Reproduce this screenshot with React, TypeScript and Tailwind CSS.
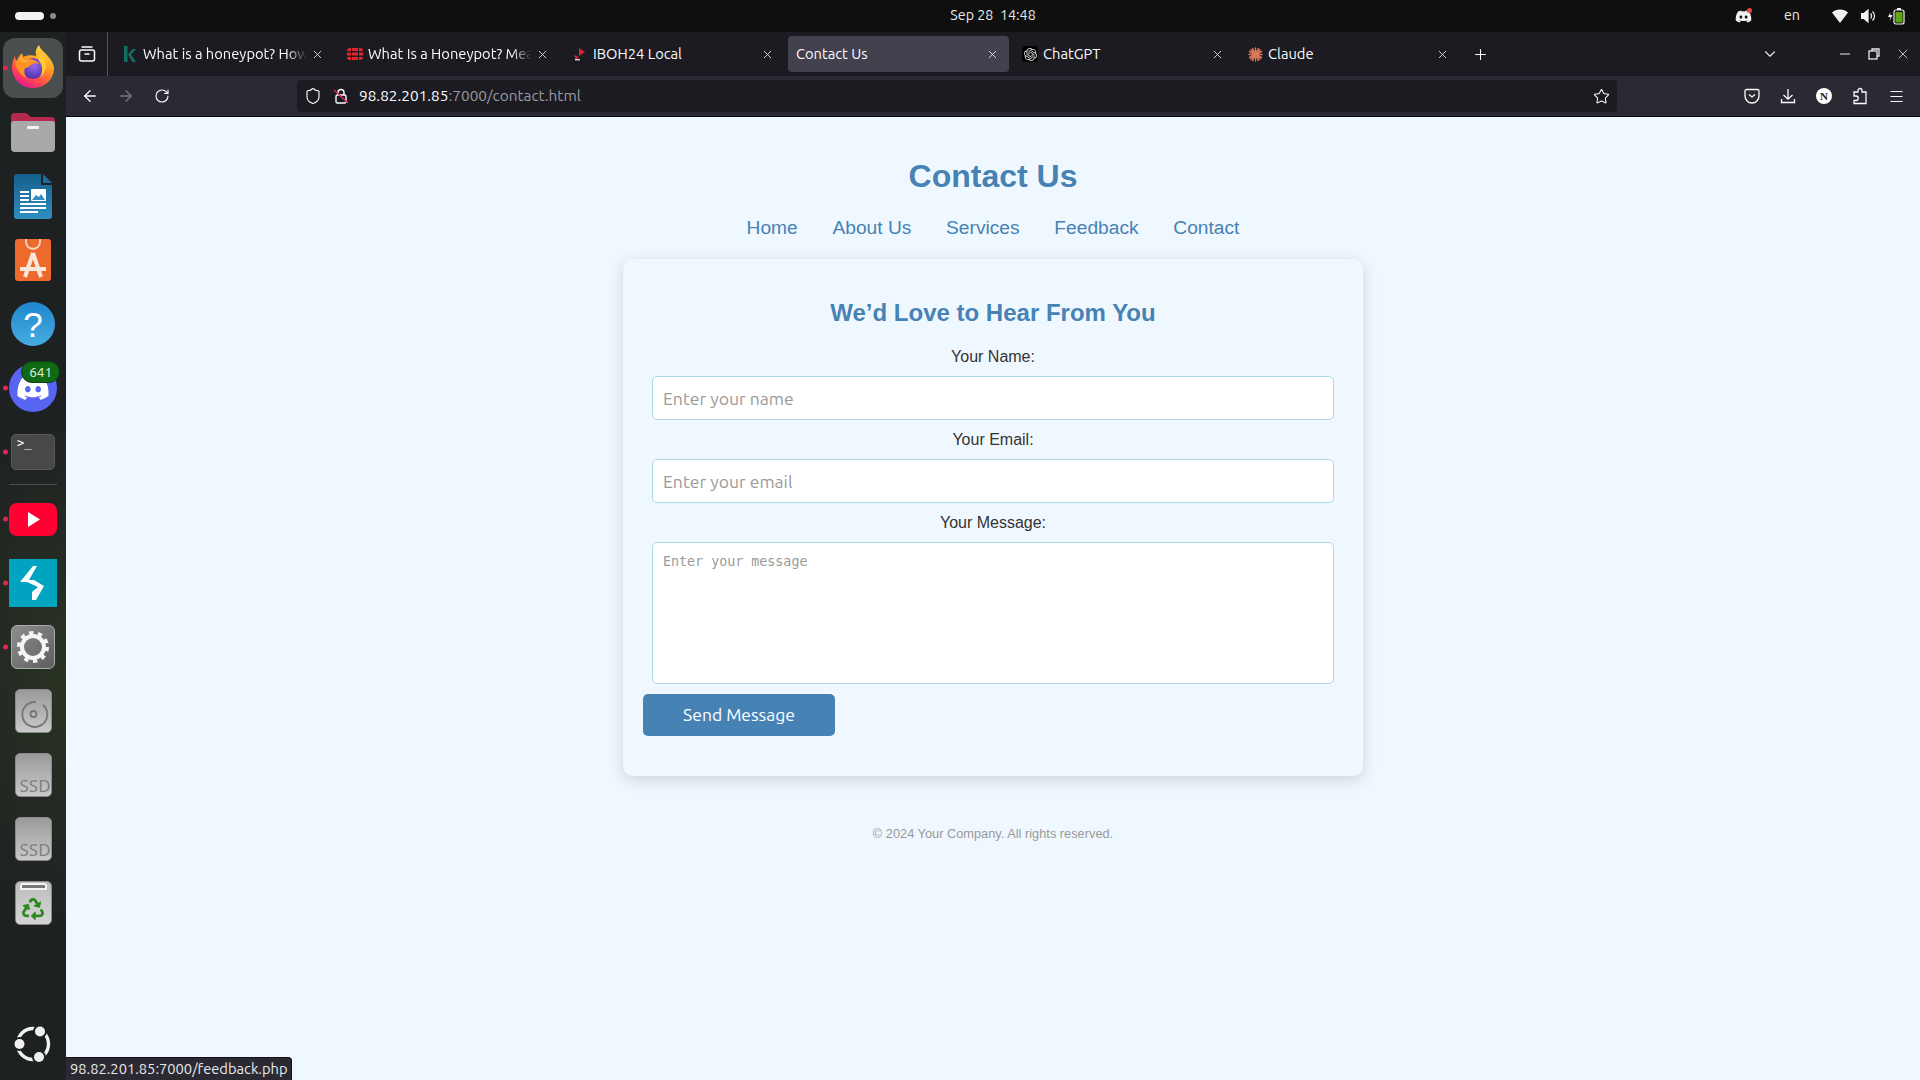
import React from "react";
import { ArrowLeft, ArrowRight, RotateCw, Shield, Star, Menu, X, Plus, ChevronDown, Minus } from "lucide-react";
import { FaDiscord, FaRecycle } from "react-icons/fa";
import { SiOpenai } from "react-icons/si";

const UI = "font-['Ubuntu','Noto_Sans',sans-serif]";

function Firefox() {
  return (
    <svg width="42" height="43" viewBox="0 0 42 43">
      <defs>
        <linearGradient id="ffa" x1="0.85" y1="0" x2="0.3" y2="1">
          <stop offset="0" stopColor="#ffe650" />
          <stop offset="0.4" stopColor="#ffa120" />
          <stop offset="0.75" stopColor="#ff4a4a" />
          <stop offset="1" stopColor="#e9169a" />
        </linearGradient>
        <radialGradient id="ffb" cx="0.55" cy="0.35" r="0.75">
          <stop offset="0" stopColor="#9a68ea" />
          <stop offset="1" stopColor="#4328a8" />
        </radialGradient>
      </defs>
      <path d="M27 0c1 4 4 6 7 9 5 5 8 11 8 14 0 11-9 20-21 20S0 34 0 22c0-5 2-9 3-11l1 5c2-3 3-5 6-8l1 4c4-2 9-2 13-1-1-4 0-8 3-11z" fill="url(#ffa)" />
      <circle cx="21" cy="23.500" r="10.500" fill="url(#ffb)" />
      <path d="M3 17c4-3 9-4 13-3 5 0 9 2 12 5-4-1-7-1-9 1-2 1-3 3-6 3-1 3-1 7 2 10C9 31 4 24 3 17z" fill="#ff9422" />
      <path d="M7 15l3-6 1 5 5 2-4 2z" fill="#ffb03a" />
      <path d="M27 8c5 3 8 9 7 15-1 4-3 7-6 9 3-5 3-12-1-16-1-2-1-5 0-8z" fill="#ffc830" />
    </svg>
  );
}

function Files() {
  return (
    <svg width="46" height="42" viewBox="0 0 46 42">
      <path d="M1 6a4 4 0 0 1 4-4h11l5 4h20a4 4 0 0 1 4 4v10H1z" fill="#b5294e" />
      <path d="M1 13a3 3 0 0 1 3-3h38a3 3 0 0 1 3 3v24a4 4 0 0 1-4 4H5a4 4 0 0 1-4-4z" fill="#a9a9a9" />
      <rect x="17" y="15" width="12" height="3" rx="1" fill="#f2f2f2" />
    </svg>
  );
}

function Writer() {
  return (
    <svg width="38" height="45" viewBox="0 0 38 45">
      <defs>
        <linearGradient id="wr" x1="0" y1="0" x2="0" y2="1">
          <stop offset="0" stopColor="#155e8c" />
          <stop offset="1" stopColor="#2f8fc0" />
        </linearGradient>
      </defs>
      <path d="M3 0h24v11h11v31a3 3 0 0 1-3 3H3a3 3 0 0 1-3-3V3a3 3 0 0 1 3-3z" fill="url(#wr)" />
      <path d="M29 0l9 9h-9z" fill="#1c6d9c" />
      <g fill="#fff">
        <rect x="6" y="17" width="9" height="2" />
        <rect x="6" y="21" width="9" height="2" />
        <rect x="6" y="25" width="9" height="2" />
        <rect x="6" y="29" width="26" height="2" />
        <rect x="6" y="33" width="26" height="2" />
        <rect x="6" y="37" width="18" height="2" />
        <rect x="17" y="15" width="15" height="12" rx="1" />
      </g>
      <path d="M18 26l4-5 3 2 2-3 4 6z" fill="#2f8fc0" />
    </svg>
  );
}

function Store() {
  return (
    <svg width="36" height="42" viewBox="0 0 36 42">
      <rect x="0" y="0" width="36" height="42" rx="3" fill="#ed6a2c" />
      <path d="M11 0v3c0 9 14 9 14 0V0" fill="none" stroke="#f7d9c8" strokeWidth="1.800" />
      <path d="M18 14L10 38M18 14l8 24M5 30h26" fill="none" stroke="#fbe6da" strokeWidth="4" />
    </svg>
  );
}

function Help() {
  return (
    <div className="flex h-[44px] w-[44px] items-center justify-center rounded-full bg-[linear-gradient(#1f86cf,#46ade0)] font-['Liberation_Sans',sans-serif] text-[35px] leading-none text-white">?</div>
  );
}

function DiscordDock() {
  return (
    <div className="flex h-[48px] w-[48px] items-center justify-center rounded-full bg-[#5865f2] text-white">
      <FaDiscord size={34} />
    </div>
  );
}

function Terminal() {
  return (
    <div className="h-[36px] w-[44px] rounded-[5px] border border-[#5a5a5a] bg-[#484848] pl-[5px] font-['DejaVu_Sans_Mono',monospace] text-[12px] leading-[17px] text-white">&gt;_</div>
  );
}

function Youtube() {
  return (
    <svg width="48" height="33" viewBox="0 0 48 33">
      <rect width="48" height="33" rx="8" fill="#ff0033" />
      <path d="M19 9l12 7.500L19 24z" fill="#fff" />
    </svg>
  );
}

function Bolt() {
  return (
    <svg width="48" height="48" viewBox="0 0 48 48">
      <rect width="48" height="48" fill="#00a4c0" />
      <path d="M24 7h4l-8 14h5l10 6-8 14h-4v-8l6-5-11-5h-7z" fill="#fff" />
    </svg>
  );
}

function Settings() {
  return (
    <div className="flex h-[44px] w-[44px] items-center justify-center rounded-[6px] border border-[#a9a9a9] bg-[linear-gradient(135deg,#8e8e8e,#5e5e5e)]">
      <svg width="32" height="32" viewBox="0 0 32 32" fill="none" stroke="#f4f4f4">
        <circle cx="16" cy="16" r="11" strokeWidth="4" />
        <circle cx="16" cy="16" r="14" strokeWidth="4" strokeDasharray="4.300 4.500" />
      </svg>
    </div>
  );
}

function Drive({ children }: { children: React.ReactNode }) {
  return (
    <div className="relative h-[44px] w-[37px] overflow-hidden rounded-[5px] border border-[#8a8a8a] bg-[linear-gradient(#9a9a9a,#c9c9c9)]">{children}</div>
  );
}

function Disc() {
  return (
    <Drive>
      <svg width="35" height="42" viewBox="0 0 35 42">
        <path d="M27 15a12.500 12.500 0 1 1-7-3" fill="none" stroke="#777" strokeWidth="1.900" />
        <circle cx="17.500" cy="24" r="3" fill="none" stroke="#777" strokeWidth="1.800" />
      </svg>
    </Drive>
  );
}

function Ssd() {
  return (
    <Drive>
      <div className="absolute bottom-[0px] left-[4px] font-['Noto_Sans',sans-serif] text-[17px] leading-[20px] text-[#808080]">SSD</div>
    </Drive>
  );
}

function Trash() {
  return (
    <div className="relative flex h-[44px] w-[37px] items-end justify-center overflow-hidden rounded-[5px] border border-[#8a8a8a] bg-[linear-gradient(#bdbdbd,#d4d4d4)] pb-[4px]">
      <div className="absolute left-[4px] right-[4px] top-[1px] h-[7px] rounded-t-[3px] border-2 border-[#f2f2f2] bg-[#777]" />
      <FaRecycle size={22} className="text-[#2a8a1e]" />
    </div>
  );
}

function UbuntuLogo() {
  return (
    <svg width="38" height="38" viewBox="0 0 38 38">
      <circle cx="19" cy="19" r="15.500" fill="none" stroke="#f0f0f0" strokeWidth="3.400" />
      <circle cx="26" cy="6.500" r="7" fill="#1f2223" />
      <circle cx="5.500" cy="19" r="7" fill="#1f2223" />
      <circle cx="25" cy="32" r="7" fill="#1f2223" />
      <circle cx="26" cy="6.500" r="5" fill="#f0f0f0" />
      <circle cx="5.500" cy="19" r="5" fill="#f0f0f0" />
      <circle cx="25" cy="32" r="5" fill="#f0f0f0" />
    </svg>
  );
}

function DockItem({ dot, children }: { dot?: boolean; children: React.ReactNode }) {
  return (
    <div className="relative flex h-[64px] w-full shrink-0 items-center justify-center">
      {dot && <span className="absolute left-[3px] top-1/2 h-[5px] w-[5px] -translate-y-1/2 rounded-full bg-[#e0284f]" />}
      {children}
    </div>
  );
}

function Sidebar() {
  return (
    <aside className="flex h-full w-[66px] shrink-0 flex-col items-center bg-[#1e2122] bg-[radial-gradient(ellipse_130px_260px_at_100%_640px,#2a3423,transparent)] pt-[4px]">
      <div className="relative flex h-[64px] w-full shrink-0 items-center justify-center">
        <div className="absolute left-[3px] top-[2px] h-[60px] w-[60px] rounded-[12px] bg-[#4b4e4e]" />
        <span className="absolute left-[3px] top-1/2 h-[5px] w-[5px] -translate-y-1/2 rounded-full bg-[#e0284f]" />
        <div className="relative -mt-[3px] flex"><Firefox /></div>
      </div>
      <DockItem><Files /></DockItem>
      <DockItem><Writer /></DockItem>
      <DockItem><Store /></DockItem>
      <DockItem><Help /></DockItem>
      <DockItem dot>
        <DiscordDock />
        <span className={`absolute right-[6px] top-[5px] h-[22px] rounded-full border border-[#0c3f0c] bg-[#106a14] px-[7px] text-[13.500px] leading-[20px] text-[#e8f5e8] ${UI}`}>641</span>
      </DockItem>
      <DockItem dot><Terminal /></DockItem>
      <div className="mb-[2px] h-[1px] w-[48px] shrink-0 bg-[#4b4e4e]" />
      <DockItem dot><Youtube /></DockItem>
      <DockItem dot><Bolt /></DockItem>
      <DockItem dot><Settings /></DockItem>
      <DockItem><Disc /></DockItem>
      <DockItem><Ssd /></DockItem>
      <DockItem><Ssd /></DockItem>
      <DockItem><Trash /></DockItem>
      <div className="mb-[17px] mt-auto"><UbuntuLogo /></div>
    </aside>
  );
}

function Tab({ title, icon, active, fade }: { title: string; icon?: React.ReactNode; active?: boolean; fade?: boolean }) {
  return (
    <div className="flex h-[44px] w-[225px] shrink-0 items-center px-[2px]">
      <div className={`flex h-[36px] w-[221px] items-center rounded-[4px] ${active ? "bg-[#42414d] pl-[8px]" : "pl-[9px]"} pr-[10px]`}>
        {icon && <span className="mr-[5px] flex h-[16px] w-[16px] shrink-0 items-center justify-center">{icon}</span>}
        <span className={`min-w-0 flex-1 whitespace-nowrap text-[14.700px] text-[#fbfbfe] ${UI} ${fade ? "[mask-image:linear-gradient(to_right,#000_88%,transparent)]" : ""}`}>{title}</span>
        <X size={13} strokeWidth={1.600} className="ml-[4px] shrink-0 text-[#e8e8ea]" />
      </div>
    </div>
  );
}

function TabBar() {
  return (
    <div className="flex h-[44px] items-center bg-[#1c1b22]">
      <div className="flex h-full w-[42px] items-center justify-center border-r border-[#55545c]">
        <svg width="18" height="18" viewBox="0 0 18 18" fill="none" stroke="#fbfbfe" strokeWidth="1.500">
          <rect x="1.500" y="5" width="15" height="11" rx="2" />
          <path d="M3.500 2h11M6.500 9h5" />
        </svg>
      </div>
      <div className="w-[3px]" />
      <Tab fade title="What is a honeypot? How" icon={
        <svg width="14" height="18" viewBox="0 0 14 18"><path d="M1 1h3.500v16H1zM13 4L8 9.500l5 7.500H9.500L5 9.500 9.500 4z" fill="#10705f" /></svg>
      } />
      <Tab fade title="What Is a Honeypot? Mea" icon={
        <svg width="16" height="12" viewBox="0 0 16 12" fill="#e1252b">
          <path d="M0 3a3 3 0 0 1 3-3h1v3H0zM5 0h6v3H5zM12 0h1a3 3 0 0 1 3 3H12zM0 4.500h4v3H0zM5 4.500h6v3H5zM12 4.500h4v3h-4zM0 9h4v3H3a3 3 0 0 1-3-3zM5 9h6v3H5zM12 9h4a3 3 0 0 1-3 3h-1z" />
        </svg>
      } />
      <Tab title="IBOH24 Local" icon={
        <svg width="14" height="14" viewBox="0 0 14 14"><path d="M6 1l6 4-6 4z" fill="#d4213d" /><path d="M1 8l5 2-3 3z" fill="#d4213d" /><path d="M2 12h5v1.400H2z" fill="#ddd" /></svg>
      } />
      <Tab active title="Contact Us" />
      <Tab title="ChatGPT" icon={
        <span className="flex h-[16px] w-[16px] items-center justify-center rounded-[4px] bg-black"><SiOpenai size={13} className="text-[#ddd]" /></span>
      } />
      <Tab title="Claude" icon={
        <svg width="15" height="15" viewBox="0 0 16 16" stroke="#d97757" strokeWidth="1.500" strokeLinecap="round">
          <path d="M8 1v14M1 8h14M3 3l10 10M13 3L3 13M4.800 1.500l6.400 13M11.200 1.500l-6.400 13M1.500 4.800l13 6.400M14.500 4.800l-13 6.400" />
        </svg>
      } />
      <div className="ml-[5px] flex w-[28px] justify-center"><Plus size={17} strokeWidth={1.500} className="text-[#fbfbfe]" /></div>
      <div className="ml-[267px]"><ChevronDown size={18} strokeWidth={1.500} className="text-[#e8e8ea]" /></div>
      <div className="ml-[58px] flex items-center gap-[14px] text-[#e8e8ea]">
        <Minus size={16} strokeWidth={1.500} />
        <svg width="14" height="14" viewBox="0 0 14 14" fill="none" stroke="currentColor" strokeWidth="1.300">
          <rect x="2" y="4" width="8" height="8" />
          <path d="M5 4V2h7v7h-2" />
        </svg>
        <X size={16} strokeWidth={1.200} />
      </div>
    </div>
  );
}

function ToolSlot({ children }: { children: React.ReactNode }) {
  return <span className="flex w-[36px] shrink-0 justify-center">{children}</span>;
}

function Toolbar() {
  return (
    <div className="flex h-[40px] items-center bg-[#2b2a33] text-[#fbfbfe]">
      <ArrowLeft size={18} strokeWidth={1.700} className="ml-[15px]" />
      <ArrowRight size={18} strokeWidth={1.700} className="ml-[18px] text-[#77767d]" />
      <RotateCw size={16} strokeWidth={1.700} className="ml-[19px]" />
      <div className="ml-[127px] flex h-[32px] w-[1320px] items-center rounded-[4px] bg-[#1c1b22] pl-[7px] pr-[7px]">
        <Shield size={18} strokeWidth={1.500} />
        <span className="relative ml-[11px] block h-[16px] w-[16px]">
          <svg width="16" height="16" viewBox="0 0 16 16" fill="none" stroke="#fbfbfe" strokeWidth="1.400">
            <rect x="3" y="7" width="10" height="8" rx="1.500" />
            <path d="M5 7V4.500a3 3 0 0 1 6 0V7" />
            <path d="M1 2l14 13" stroke="#e22850" />
          </svg>
        </span>
        <span className={`ml-[10px] flex-1 whitespace-nowrap text-[15.400px] text-[#fbfbfe] ${UI}`}>
          98.82.201.85<span className="text-[#9a9aa0]">:7000/contact.html</span>
        </span>
        <Star size={17} strokeWidth={1.500} />
      </div>
      <div className="ml-[117px] flex items-center">
        <ToolSlot>
          <svg width="16" height="16" viewBox="0 0 16 16" fill="none" stroke="#fbfbfe" strokeWidth="1.300">
            <path d="M2.500 1.500h11A1.500 1.500 0 0 1 15 3v5A7 7 0 0 1 1 8V3a1.500 1.500 0 0 1 1.500-1.500z" />
            <path d="M5 6.500l3 2.500 3-2.500" />
          </svg>
        </ToolSlot>
        <ToolSlot>
          <svg width="16" height="16" viewBox="0 0 16 16" fill="none" stroke="#fbfbfe" strokeWidth="1.300">
            <path d="M8 1v10M3.500 7L8 11.200 12.500 7M1.500 11v3.500h13V11" />
          </svg>
        </ToolSlot>
        <ToolSlot>
          <span className="flex h-[16px] w-[16px] items-center justify-center rounded-full bg-white font-['Liberation_Serif',serif] text-[11px] font-bold leading-none text-[#222]">N</span>
        </ToolSlot>
        <ToolSlot>
          <svg width="16" height="18" viewBox="0 0 16 18" fill="none" stroke="#fbfbfe" strokeWidth="1.300">
            <path d="M2 5h4V3.500a2 2 0 0 1 4 0V5h4v11.500H2v-3h2a2 2 0 0 0 0-4.500H2z" />
          </svg>
        </ToolSlot>
        <ToolSlot><Menu size={17} strokeWidth={1.400} /></ToolSlot>
      </div>
    </div>
  );
}

function Field({ label, placeholder }: { label: string; placeholder: string }) {
  return (
    <>
      <label className="mb-[10px] block h-[18px] text-center text-[16px] leading-[18px] text-[#333]">{label}</label>
      <input
        readOnly
        placeholder={placeholder}
        className={`mb-[11px] ml-[9px] block h-[44px] w-[682px] rounded-[5px] border border-[#add8e6] bg-white px-[10px] text-[17.600px] outline-none placeholder:text-[#9a9a9a] ${UI}`}
      />
    </>
  );
}

function Page() {
  return (
    <main className="flex flex-1 flex-col items-center bg-[#f0f8ff] pt-[41px] font-['Liberation_Sans',sans-serif]">
      <h1 className="h-[37px] text-[32px] font-bold leading-[37px] text-[#4682b4]">Contact Us</h1>
      <nav className="mt-[22px] flex h-[22px] gap-[34.700px] text-[19.200px] leading-[22px] text-[#4682b4]">
        <span>Home</span>
        <span>About Us</span>
        <span>Services</span>
        <span>Feedback</span>
        <span>Contact</span>
      </nav>
      <section className="mt-[20px] h-[517px] w-[740px] rounded-[10px] bg-[#f0f8ff] px-[20px] pt-[40px] shadow-[0_4px_15px_rgba(0,0,0,0.15)]">
        <h2 className="mb-[21px] h-[28px] text-center text-[24px] font-bold leading-[28px] text-[#4682b4]">We’d Love to Hear From You</h2>
        <Field label="Your Name:" placeholder="Enter your name" />
        <Field label="Your Email:" placeholder="Enter your email" />
        <label className="mb-[10px] block h-[18px] text-center text-[16px] leading-[18px] text-[#333]">Your Message:</label>
        <textarea
          readOnly
          placeholder="Enter your message"
          className="ml-[9px] block h-[142px] w-[682px] resize-none rounded-[5px] border border-[#add8e6] bg-white px-[10px] pb-[10px] pt-[11px] font-['DejaVu_Sans_Mono',monospace] text-[13.330px] leading-[15px] outline-none placeholder:text-[#9a9a9a]"
        />
        <button className={`mt-[10px] block h-[42px] w-[192px] rounded-[5px] bg-[#4682b4] text-[17.500px] text-white ${UI}`}>Send Message</button>
      </section>
      <footer className="mt-[50px] text-[12.800px] leading-[15px] text-[#999]">© 2024 Your Company. All rights reserved.</footer>
    </main>
  );
}

export default function App() {
  return (
    <div className="relative flex h-[1080px] w-[1920px] flex-col overflow-hidden bg-[#0f0f0f]">
      <header className={`relative flex h-[32px] shrink-0 items-center bg-[#0f0f0f] text-[14.300px] text-[#e8e8e8] ${UI}`}>
        <span className="ml-[15px] h-[8px] w-[29px] rounded-full bg-[#f2f2f2]" />
        <span className="ml-[6px] h-[6px] w-[6px] rounded-full bg-[#8a8a8a]" />
        <span className="absolute left-1/2 ml-[33px] -translate-x-1/2 whitespace-nowrap">Sep 28&nbsp;&nbsp;14:48</span>
        <div className="ml-auto flex items-center pr-[15px]">
          <span className="relative block"><FaDiscord size={17} className="text-[#f0f0f0]" /><span className="absolute right-[0px] top-[0px] h-[5px] w-[5px] rounded-full bg-[#ee4444]" /></span>
          <span className="ml-[32px]">en</span>
          <svg width="16" height="14" viewBox="0 0 16 14" className="ml-[32px]">
            <path d="M0 3.500C4-.5 12-.5 16 3.500L8 14z" fill="#f2f2f2" />
          </svg>
          <svg width="15" height="14" viewBox="0 0 15 14" className="ml-[13px]" fill="none" stroke="#f2f2f2" strokeWidth="1.200">
            <path d="M0 4.500h3L7 1v12L3 9.500H0z" fill="#f2f2f2" />
            <path d="M9.500 4.500a3.500 3.500 0 0 1 0 5M11.500 2.500a6 6 0 0 1 0 9" />
          </svg>
          <svg width="18" height="18" viewBox="0 0 18 18" className="ml-[11px]">
            <path d="M3.500 5L1 10h2.500L2.500 14 5.500 8H3z" fill="#f2f2f2" />
            <rect x="7" y="3" width="10" height="14" rx="2" fill="none" stroke="#f2f2f2" strokeWidth="1.200" />
            <rect x="10" y="1" width="4" height="2" fill="#f2f2f2" />
            <rect x="8.500" y="5" width="7" height="10.500" fill="#5ea70f" />
          </svg>
        </div>
      </header>
      <div className="flex min-h-0 flex-1">
        <Sidebar />
        <div className="flex min-w-0 flex-1 flex-col">
          <TabBar />
          <Toolbar />
          <div className="h-[1px] bg-black" />
          <Page />
        </div>
      </div>
      <div className={`absolute bottom-0 left-[66px] h-[23px] w-[226px] rounded-tr-[4px] border-r border-t border-[#111] bg-[#2b2a33] pl-[4px] text-[14.700px] leading-[21px] text-[#e8e8ea] ${UI}`}>98.82.201.85:7000/feedback.php</div>
    </div>
  );
}
